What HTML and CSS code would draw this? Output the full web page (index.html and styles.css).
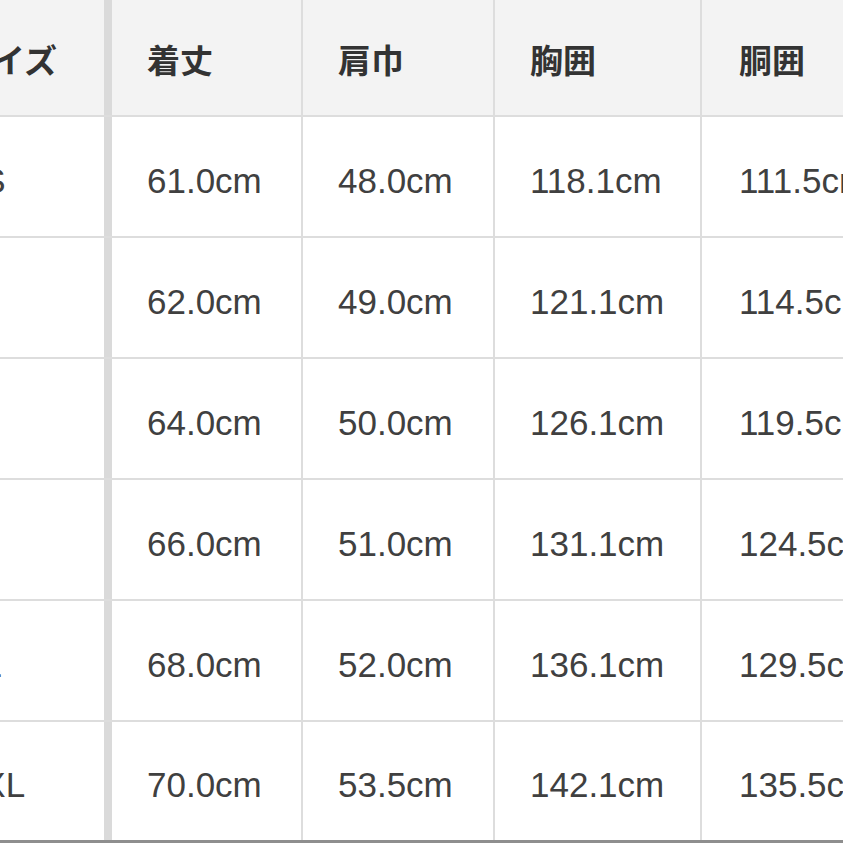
FILE: index.html
```html
<!DOCTYPE html>
<html lang="ja">
<head>
<meta charset="utf-8">
<title>サイズ表</title>
<link rel="stylesheet" href="styles.css">
</head>
<body>
<div class="viewport">
  <div class="size-table">
    <div class="row head">
      <div class="cell c1">サイズ</div>
      <div class="cell c2">着丈</div>
      <div class="cell c3">肩巾</div>
      <div class="cell c4">胸囲</div>
      <div class="cell c5">胴囲</div>
    </div>
    <div class="row">
      <div class="cell c1">XS</div>
      <div class="cell c2">61.0cm</div>
      <div class="cell c3">48.0cm</div>
      <div class="cell c4">118.1cm</div>
      <div class="cell c5">111.5cm</div>
    </div>
    <div class="row">
      <div class="cell c1">S</div>
      <div class="cell c2">62.0cm</div>
      <div class="cell c3">49.0cm</div>
      <div class="cell c4">121.1cm</div>
      <div class="cell c5">114.5cm</div>
    </div>
    <div class="row">
      <div class="cell c1">M</div>
      <div class="cell c2">64.0cm</div>
      <div class="cell c3">50.0cm</div>
      <div class="cell c4">126.1cm</div>
      <div class="cell c5">119.5cm</div>
    </div>
    <div class="row">
      <div class="cell c1">L</div>
      <div class="cell c2">66.0cm</div>
      <div class="cell c3">51.0cm</div>
      <div class="cell c4">131.1cm</div>
      <div class="cell c5">124.5cm</div>
    </div>
    <div class="row">
      <div class="cell c1">XL</div>
      <div class="cell c2">68.0cm</div>
      <div class="cell c3">52.0cm</div>
      <div class="cell c4">136.1cm</div>
      <div class="cell c5">129.5cm</div>
    </div>
    <div class="row last">
      <div class="cell c1">XXL</div>
      <div class="cell c2">70.0cm</div>
      <div class="cell c3">53.5cm</div>
      <div class="cell c4">142.1cm</div>
      <div class="cell c5">135.5cm</div>
    </div>
  </div>
</div>
</body>
</html>
```

FILE: styles.css
```css
html, body {
  margin: 0;
  padding: 0;
  background: #ffffff;
}

.viewport {
  width: 843px;
  height: 843px;
  overflow: hidden;
}

.size-table {
  margin-left: -76px;
  width: 980px;
  display: flex;
  flex-direction: column;
  font-family: "Liberation Sans", Arial, "Noto Sans CJK JP", sans-serif;
  font-size: 35px;
  color: #404040;
}

.row {
  display: grid;
  grid-template-columns: 188px 191px 192px 207px 202px;
  height: 121px;
  box-sizing: border-box;
  border-bottom: 2px solid #dddddd;
}

.row.head {
  height: 117px;
  background: #f3f3f3;
  font-family: "Noto Sans CJK JP", "Noto Sans", sans-serif;
  font-weight: 700;
  font-size: 33px;
  color: #333333;
}

.row.last {
  height: 121px;
  border-bottom: 3px solid #8e8e8e;
}

.cell {
  box-sizing: border-box;
  display: flex;
  align-items: center;
  padding-left: 35px;
  padding-top: 8px;
  border-right: 2px solid #dddddd;
  white-space: nowrap;
  overflow: hidden;
}

.head .cell {
  padding-top: 2px;
}

.cell.c1 {
  border-right: 8px solid #dadada;
}

.cell.c5 {
  padding-left: 37px;
}
```
